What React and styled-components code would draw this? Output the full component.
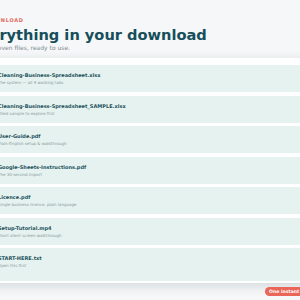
import React from 'react';
import styled, { createGlobalStyle } from 'styled-components';

const GlobalStyle = createGlobalStyle`
  html, body {
    margin: 0;
    padding: 0;
    background-color: #f5f7f8;
    overflow: hidden;
    font-family: "DejaVu Sans", Verdana, sans-serif;
  }
`;

const Page = styled.main`
  width: 420px;
  height: 300px;
  margin-left: -30px;
  display: flex;
  flex-direction: column;
`;

const Header = styled.header`
  padding-top: 17px;
  display: flex;
  flex-direction: column;
`;

const Eyebrow = styled.span`
  margin-left: -6px;
  font-size: 5px;
  line-height: 7px;
  font-weight: bold;
  letter-spacing: 0.7px;
  color: #e4675a;
  text-transform: uppercase;
`;

const Title = styled.h1`
  margin: 2px 0 0;
  font-size: 14.6px;
  line-height: 18px;
  font-weight: bold;
  color: #164e5b;
`;

const Subtitle = styled.p`
  margin: 0;
  font-size: 6px;
  line-height: 8px;
  color: #7d8b8e;
`;

const Card = styled.section`
  margin-top: 6px;
  background-color: #ffffff;
  box-shadow: 0 3px 10px rgba(40, 60, 70, 0.16);
  padding: 7px 0 2px 0;
  display: flex;
  flex-direction: column;
  gap: 3.5px;
`;

const FileRow = styled.div`
  display: flex;
  align-items: flex-start;
  gap: 6px;
  background-color: #e5f2ef;
  padding: 7px 8px ${p => (p.$last ? '13px' : '7px')} 12px;
`;

const FileIcon = styled.div`
  width: 10px;
  height: 12px;
  border-radius: 2px;
  background-color: #c9e3de;
  flex-shrink: 0;
`;

const FileText = styled.div`
  display: flex;
  flex-direction: column;
  gap: 1px;
`;

const FileName = styled.span`
  font-size: 5px;
  line-height: 7px;
  font-weight: bold;
  color: #1f535d;
`;

const FileNote = styled.span`
  font-size: 4px;
  line-height: 5px;
  color: #8a999b;
`;

const Footer = styled.footer`
  display: flex;
  padding: 4px 0 0 295px;
`;

const Badge = styled.span`
  background-color: #ea6659;
  color: #ffffff;
  font-size: 4.6px;
  line-height: 9px;
  font-weight: bold;
  padding: 0 4px;
  border-radius: 5px;
  white-space: nowrap;
`;

const files = [
  { name: 'Cleaning-Business-Spreadsheet.xlsx', note: 'The system — all 9 working tabs' },
  { name: 'Cleaning-Business-Spreadsheet_SAMPLE.xlsx', note: 'Filled sample to explore first' },
  { name: 'User-Guide.pdf', note: 'Plain-English setup & walkthrough' },
  { name: 'Google-Sheets-Instructions.pdf', note: 'The 30-second import' },
  { name: 'Licence.pdf', note: 'Single business licence, plain language' },
  { name: 'Setup-Tutorial.mp4', note: 'Short silent screen walkthrough' },
  { name: 'START-HERE.txt', note: 'Open this first' },
];

export default function App() {
  return (
    <>
      <GlobalStyle />
      <Page>
        <Header>
          <Eyebrow>Your download</Eyebrow>
          <Title>Everything in your download</Title>
          <Subtitle>All your seven files, ready to use.</Subtitle>
        </Header>
        <Card>
          {files.map((f, i) => (
            <FileRow key={f.name} $last={i === files.length - 1}>
              <FileIcon />
              <FileText>
                <FileName>{f.name}</FileName>
                <FileNote>{f.note}</FileNote>
              </FileText>
            </FileRow>
          ))}
        </Card>
        <Footer>
          <Badge>One instant download</Badge>
        </Footer>
      </Page>
    </>
  );
}
